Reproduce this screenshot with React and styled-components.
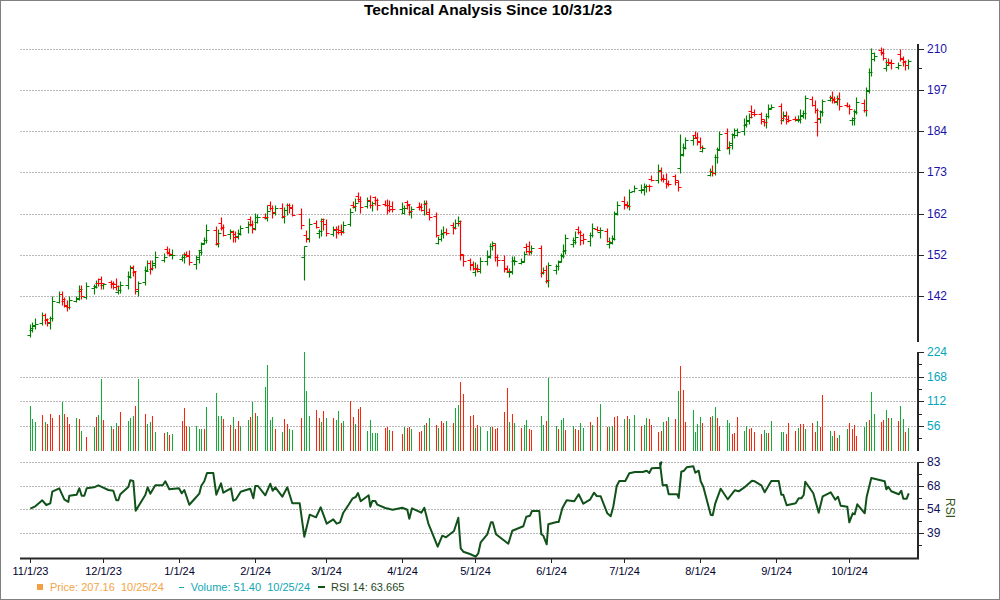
import React from 'react'
import styled, { createGlobalStyle } from 'styled-components'

const Global = createGlobalStyle`
  html, body { margin: 0; padding: 0; background: #fff; }
`
const Frame = styled.div`
  width: 1000px;
  height: 600px;
  box-sizing: border-box;
  border: 1px solid #808080;
  background: #fff;
  display: flex;
  flex-direction: column;
  font-family: 'Liberation Sans', Arial, sans-serif;
  overflow: hidden;
`
const Title = styled.h1`
  margin: 0;
  height: 18px;
  padding-right: 24px;
  line-height: 18px;
  text-align: center;
  font-size: 15.5px;
  font-weight: bold;
  color: #000;
`
const Chart = styled.svg`
  display: block;
  width: 998px;
  height: 558px;
  flex: none;
`
const GridLine = styled.line`
  stroke: #b9b9b9;
  stroke-width: 1;
  stroke-dasharray: 2 1;
`
const AxisLine = styled.path`
  fill: none;
  stroke: #262626;
  stroke-width: ${p => p.$w || 1};
`
const Bars = styled.path`
  fill: none;
  stroke: ${p => p.$color};
  stroke-width: ${p => p.$w};
`
const RsiLine = styled.polyline`
  fill: none;
  stroke: #11521a;
  stroke-width: 2;
  stroke-linejoin: round;
`
const Label = styled.text`
  font-family: 'Liberation Sans', Arial, sans-serif;
  font-size: ${p => p.$size || 12}px;
  fill: ${p => p.$color};
  text-anchor: ${p => p.$anchor || 'start'};
`
const Legend = styled.div`
  display: flex;
  align-items: center;
  height: 20px;
  padding-left: 36px;
  font-size: 11px;
  line-height: 20px;
  white-space: pre;
`
const LegendItem = styled.div`
  display: flex;
  align-items: center;
  color: ${p => p.$color};
  margin-right: ${p => p.$gap}px;
`
const Swatch = styled.span`
  display: block;
  width: ${p => p.$w}px;
  height: ${p => p.$h}px;
  margin-right: ${p => p.$gap}px;
  background: ${p => p.$color};
`

// trading days: calendar offset from 11/1/23, no weekends, no market holidays
const HOLIDAYS = [22, 54, 61, 75, 110, 149, 208, 231, 246, 306]
const DAYS = []
for (let d = 0; d < 360; d++) {
  const wd = (3 + d) % 7
  if (wd !== 0 && wd !== 6 && !HOLIDAYS.includes(d)) DAYS.push(d)
}
const dayX = d => Math.floor(30.5 + d * 2.445) + 0.5

// close prices, as read off the chart (colour + y) per trading day
const A = 'g385 g379 g373 g346 r358 r365 g355 g303 g282 r298 r316 r322 g301 g298 g268 r287 g257 g262 g250 r250 r250 g253 r250 r262 r258 g270 g256 g232 g205 r213 r268 g250 g212 g190 r205 g190 g170 g172 r158 r162 g165 g172 g165 r168 r187 g172 g155 g132 g120 g90 r128 g100 r80 r104 g92 r112 r110 g103 g85 g72 r72 r88 g52 g52 r52 g32 r25 r37 g24 r47 g30 g15 r25 r45 r75 g138 r118 g72 r80 g93 g58 r72 r100'
const B = 'g149 r157 r157 r155 g136 g95 r78 g70 r62 r82 g62 r75 g70 r60 r76 r75 r90 r88 r88 g85 g85 r72 r92 g86 r82 r90 g70 r97 r110 r165 g178 g158 g155 r160 r145 g128 g124 r222 r243 r255 r265 g265 r268 g244 g228 g198 g190 r230 r240 r268 r272 g272 g240 g244 g245 g222 r213 r213 g205 r275 g270 r300 g254 g258 g245 g228 g210 g175 g185 g172 r157 r180 r178 g165 g145 r150 g150 r182 g188 g178 g103 g75 r75 r78 g35 g25 g28 g18 g18 r18 r0'
const C = 'g420 r445 r447 r463 r463 r451 r470 g375 g355 g330 g323 r320 r335 r352 g355 g425 r428 g382 g360 g313 r350 g340 g315 g300 g305 g283 g270 g262 r252 r253 r268 r275 g258 g237 g232 r265 g255 r272 r270 r268 g268 g255 g250 g205 r225 r240 r265 g245 g213 g205 r207 r212 g208 r228 r228 r238 g265 g245 g215 r241 g180 g125 g70 g78 r70 r85 g105 r100 r100 g105 r85 r92 r105 g92'
const closes = [
  ...A.split(' ').map(s => [s[0], 200 + +s.slice(1) / 3]),
  ...B.split(' ').map(s => [s[0], 180 + +s.slice(1) / 3]),
  ...C.split(' ').map(s => [s[0], 30 + +s.slice(1) / 3]),
]

// the few bars with an unusually long range: [high, low, open]
const LONG_BARS = {
  112: [246, 279.5, 257],
  266: [134, 173, 168],
  322: [108, 135.7, 122],
}

const VOL = '45 32 29 -36 29 -27 -37 -33 -36 49 -37 -34 -27 33 -32 20 -14 24 -34 36 72 -31 25 -22 28 -25 -39 30 33 35 -45 72 -37 27 29 -35 19 -18 19 -16 17 -30 -43 -25 24 25 22 22 -22 44 58 35 35 -32 -26 34 -22 -30 25 31 -34 49 -38 35 64 86 31 34 -22 19 -32 -27 22 21 -33 99 60 35 -41 -33 29 -40 33 -33 31 40 -28 30 -50 -34 27 -42 -44 20 31 18 18 18 -23 -24 21 -20 -17 24 -23 -24 22 -19 -20 26 -28 33 -26 23 -30 -28 30 -28 43 46 -69 -57 -35 -36 23 -26 24 20 24 -24 -22 -23 -39 -63 29 -37 28 -23 26 31 -22 -21 35 26 -30 73 25 -22 31 33 -21 25 -22 -21 28 23 -29 26 -34 47 -24 24 25 -34 -35 32 -35 32 36 -25 26 33 -32 -26 -19 -20 29 -30 34 -32 60 -85 -61 -29 41 19 27 34 -28 -34 35 44 -33 -25 31 28 -17 -18 -34 20 25 -22 -23 -19 -17 21 18 -18 30 19 19 -17 -28 -20 23 -27 -27 22 -28 -19 30 -24 -56 20 15 -20 -13 16 22 -28 -22 -26 -15 24 29 -31 59 37 -29 -31 41 -33 33 -30 45 32 -19 23'
  .split(' ').map(Number)

const noise = (i, k, max) => ((i * 7919 + k * 104729 + i * i * 31) % (max * 10)) / 10

const pricePaths = { g: '', r: '' }
DAYS.forEach((d, i) => {
  const item = closes[i]
  if (!item) return
  const [col, c] = item
  const prev = i > 0 && closes[i - 1] ? closes[i - 1][1] : c + 5
  let o = prev + noise(i, 1, 3) - 1.5
  if (col === 'g' && o <= c) o = c + 1 + noise(i, 2, 4)
  if (col === 'r' && o >= c) o = c - 1 - noise(i, 2, 4)
  let h = Math.min(o, c) - 1 - noise(i, 3, 5)
  let l = Math.max(o, c) + 1 + noise(i, 4, 5)
  if (LONG_BARS[d]) [h, l, o] = LONG_BARS[d]
  const x = dayX(d)
  const r = v => Math.round(v) + 0.5
  pricePaths[col] += `M${x} ${r(h)}V${r(l)}M${x - 3} ${r(o)}H${x}M${x} ${r(c)}H${x + 3}`
})

const volPaths = { g: '', r: '' }
DAYS.forEach((d, i) => {
  const v = VOL[i]
  if (v === undefined) return
  volPaths[v > 0 ? 'g' : 'r'] += `M${dayX(d)} 451V${451 - Math.abs(v)}`
})

const toPts = (base, ox, list) => {
  const out = []
  for (let i = 0; i < list.length; i += 2) out.push(`${(ox + list[i] / 3).toFixed(1)},${(base + list[i + 1] / 3).toFixed(1)}`)
  return out
}
const RSI = [
  ...toPts(400, 0, [91,326,106,319,127,301,139,315,151,310,157,275,178,265,193,298,205,306,208,287,230,284,238,265,245,287,253,287,260,265,282,262,295,256,310,263,325,270,340,272,349,301,355,301,361,283,385,261,391,241,400,243,407,332,436,285,443,262,451,281,466,256,488,256,496,244,508,268,537,265,545,280,553,270,568,314,583,298,598,281,604,257,613,244,621,219,640,219,649,284,663,250,670,278,693,265,700,302,708,298,722,275,736,271,751,266,760,295,766,258,774,258,796,286,811,251,818,272,826,262,847,290,862,262,877,310,899,310,913,410,929,344,948,352,962,322,980,371]),
  ...toPts(400, 330, [10,358,20,371,30,367,40,338,55,316,68,295,77,291,84,279,92,304,116,286,121,320,127,303,136,303,142,314,166,324,188,329,217,323,232,329,238,356,246,325,274,338,283,323,295,370,323,440,337,407,348,412,372,393,385,353,392,445,400,455,420,462,437,470,445,460,452,427,472,403,483,367,488,367,498,403,535,431,547,392,580,379,589,350,600,347,606,333,628,333,634,403,640,407,650,433,655,373,680,366,686,366,697,325,710,301,733,304,746,283,760,311,780,299,792,278,800,288,812,289,832,340,842,349,850,320,860,258,868,243,886,243,898,220,915,216,938,216,950,212,958,219,965,205,990,203,994,187]),
  ...toPts(450, 660, [0,40,8,106,20,105,26,133,52,133,56,144,64,65,72,62,80,52,100,49,106,68,116,62,122,94,130,110,152,194,158,196,166,160,182,116,203,148,224,121,236,124,252,113,276,92,284,94,304,106,314,127,334,93,356,93,364,134,370,134,380,166,407,160,416,145,424,145,431,135,436,95,460,130,476,188,488,139,512,127,526,149,534,140,542,167,562,170,568,217,578,190,584,193,592,163,614,190,620,140,634,84,674,94,679,118,685,110,694,124,716,133,724,122,730,146,740,146,746,130]),
].join(' ')

const PRICE_GRID = [[49, '210'], [90, '197'], [131, '184'], [172, '173'], [214, '162'], [255, '152'], [296, '142']]
const VOL_GRID = [[352, '224', false], [377, '168', true], [401, '112', true], [426, '56', true]]
const RSI_GRID = [[462, '83'], [486, '68'], [509, '54'], [533, '39']]
const MONTHS = [
  ['11/1/23', 0], ['12/1/23', 30], ['1/1/24', 61], ['2/1/24', 92], ['3/1/24', 121], ['4/1/24', 152],
  ['5/1/24', 182], ['6/1/24', 213], ['7/1/24', 243], ['8/1/24', 274], ['9/1/24', 305], ['10/1/24', 335],
]

const grid = y => <GridLine key={y} x1="20" x2="918" y1={y + 0.5} y2={y + 0.5} />
const MAJOR = [...PRICE_GRID, ...VOL_GRID, ...RSI_GRID].map(g => g[0])
const MINOR = [68, 364, 389, 414, 438, 474, 498, 521, 545]
const axisTicks = MAJOR.map(y => `M919 ${y + 0.5}h5`).join('') + MINOR.map(y => `M919 ${y + 0.5}h3`).join('')

export default function App () {
  return (
    <Frame>
      <Global />
      <Title>Technical Analysis Since 10/31/23</Title>
      <Chart viewBox="1 19 998 558">
        {PRICE_GRID.map(([y]) => grid(y))}
        {VOL_GRID.filter(v => v[2]).map(([y]) => grid(y))}
        {RSI_GRID.map(([y]) => grid(y))}

        <Bars $w={1.15} $color="#008000" d={pricePaths.g} />
        <Bars $w={1.15} $color="#ff0000" d={pricePaths.r} />
        <Bars $w={1.05} $color="#1aa83c" d={volPaths.g} />
        <Bars $w={1.05} $color="#f2280f" d={volPaths.r} />
        <RsiLine points={RSI} />

        <AxisLine $w={2} d="M918 44V342M918 352V451M918 462V559M20 558.5H919" />
        <AxisLine d={axisTicks} />
        {MONTHS.map(([t, d]) => (
          <React.Fragment key={t}>
            <AxisLine d={`M${dayX(d)} 559v4`} />
            <Label x={dayX(d)} y="575" $size={11} $anchor="middle" $color="#00002e">{t}</Label>
          </React.Fragment>
        ))}

        {PRICE_GRID.map(([y, t]) => <Label key={t} x="927" y={y + 4} $color="#1a12a8">{t}</Label>)}
        {VOL_GRID.map(([y, t]) => <Label key={t} x="927" y={y + 4} $color="#04a6ba">{t}</Label>)}
        {RSI_GRID.map(([y, t]) => <Label key={t} x="927" y={y + 4} $color="#10105a">{t}</Label>)}
        <Label x="0" y="0" $size={12} $color="#33561a" transform="translate(946 498) rotate(90)">RSI</Label>
      </Chart>
      <Legend>
        <LegendItem $color="#f4a347" $gap={15}>
          <Swatch $color="#f4a040" $w={6} $h={6} $gap={7} />
          Price: 207.16  10/25/24
        </LegendItem>
        <LegendItem $color="#0fa8b4" $gap={8}>
          <Swatch $color="#0fa8b4" $w={5} $h={1} $gap={7} />
          Volume: 51.40  10/25/24
        </LegendItem>
        <LegendItem $color="#24491a" $gap={0}>
          <Swatch $color="#11521a" $w={7} $h={2} $gap={6} />
          RSI 14: 63.665
        </LegendItem>
      </Legend>
    </Frame>
  )
}
